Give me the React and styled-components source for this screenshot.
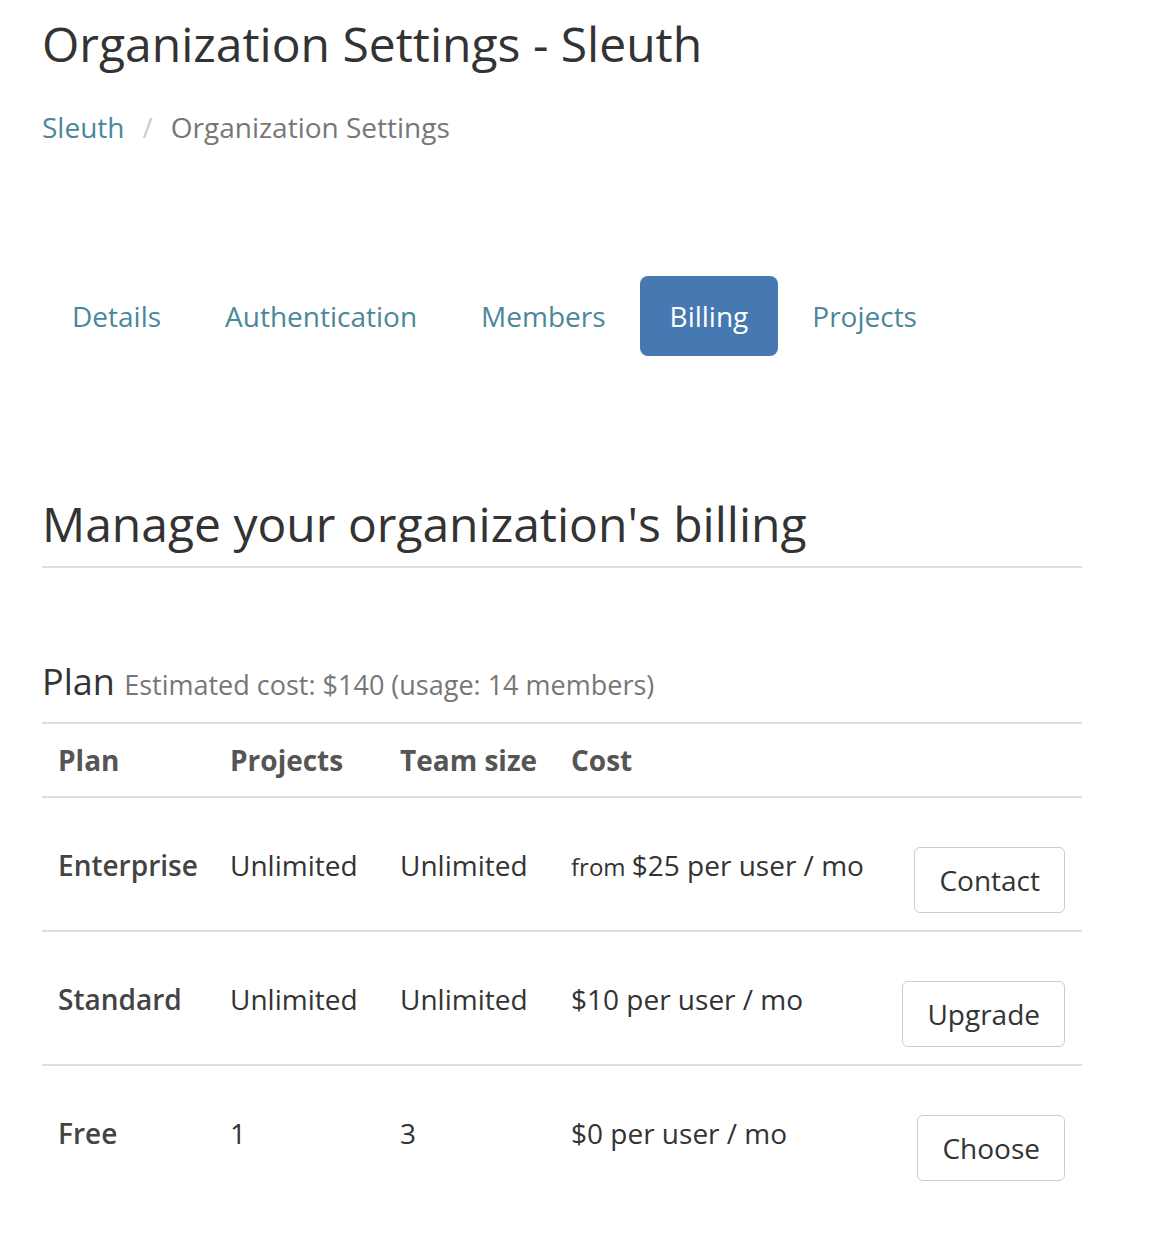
import React from "react";
import styled, { createGlobalStyle } from "styled-components";

const GlobalStyle = createGlobalStyle`
  body {
    margin: 0;
    background: #fff;
    font-family: "Open Sans", "Liberation Sans", sans-serif;
    color: #333;
  }
`;

const tabs = ["Details", "Authentication", "Members", "Billing", "Projects"];

const plans = [
  { name: "Enterprise", projects: "Unlimited", team: "Unlimited", prefix: "from", cost: "$25 per user / mo", action: "Contact" },
  { name: "Standard", projects: "Unlimited", team: "Unlimited", cost: "$10 per user / mo", action: "Upgrade" },
  { name: "Free", projects: "1", team: "3", cost: "$0 per user / mo", action: "Choose" },
];

const App = () => {
  return (
    <Page>
      <GlobalStyle />
      <Title>Organization Settings - Sleuth</Title>
      <Breadcrumb>
        <Crumb href="#">Sleuth</Crumb>
        <Sep>/</Sep>
        <Current>Organization Settings</Current>
      </Breadcrumb>
      <Tabs>
        {tabs.map((t) => (
          <Tab key={t} $active={t === "Billing"}>
            {t}
          </Tab>
        ))}
      </Tabs>
      <PageHeader>Manage your organization's billing</PageHeader>
      <SectionTitle>
        Plan <small>Estimated cost: $140 (usage: 14 members)</small>
      </SectionTitle>
      <Table>
        <HeadCell>Plan</HeadCell>
        <HeadCell>Projects</HeadCell>
        <HeadCell>Team size</HeadCell>
        <HeadCell>Cost</HeadCell>
        <HeadCell />
        {plans.map((p, i) => {
          const last = i === plans.length - 1;
          return (
            <React.Fragment key={p.name}>
              <Cell $bold $last={last}>{p.name}</Cell>
              <Cell $last={last}>{p.projects}</Cell>
              <Cell $last={last}>{p.team}</Cell>
              <Cell $last={last}>
                {p.prefix && <Prefix>{p.prefix} </Prefix>}
                {p.cost}
              </Cell>
              <ActionCell $last={last}>
                <Button>{p.action}</Button>
              </ActionCell>
            </React.Fragment>
          );
        })}
      </Table>
    </Page>
  );
};

export default App;

const Page = styled.div`
  width: 1040px;
  padding: 0 42px 40px;
`;

const Title = styled.h1`
  margin: 15px 0 0;
  font-size: 48px;
  font-weight: 400;
  line-height: 1.2;
  color: #333;
`;

const Breadcrumb = styled.div`
  display: flex;
  align-items: center;
  margin-top: 34px;
  font-size: 28px;
  line-height: 40px;
`;

const Crumb = styled.a`
  color: #4b879b;
  text-decoration: none;
`;

const Sep = styled.span`
  color: #ccc;
  padding: 0 18px;
`;

const Current = styled.span`
  color: #777;
`;

const Tabs = styled.div`
  display: flex;
  gap: 4px;
  margin-top: 129px;
`;

const Tab = styled.a`
  padding: 20px 30px;
  font-size: 28px;
  line-height: 40px;
  border-radius: 8px;
  color: ${(p) => (p.$active ? "#fff" : "#4b879b")};
  background: ${(p) => (p.$active ? "#4679b2" : "transparent")};
`;

const PageHeader = styled.h2`
  margin: 139px 0 0;
  padding-bottom: 14px;
  border-bottom: 2px solid #ddd;
  font-size: 48px;
  font-weight: 400;
  line-height: 1.2;
  color: #333;
`;

const SectionTitle = styled.h3`
  margin: 94px 0 0;
  padding-bottom: 20px;
  border-bottom: 2px solid #ddd;
  font-size: 36px;
  font-weight: 400;
  line-height: 1.1;
  color: #333;

  small {
    font-size: 27px;
    color: #777;
  }
`;

const Table = styled.div`
  display: grid;
  grid-template-columns: 172px 170px 171px 1fr auto;
`;

const HeadCell = styled.div`
  padding: 16px 16px 16px;
  font-size: 28px;
  line-height: 40px;
  font-weight: 700;
  color: #555;
  border-bottom: 2px solid #ddd;
`;

const Cell = styled.div`
  padding: 47px 16px 0;
  font-size: 28px;
  line-height: 40px;
  font-weight: ${(p) => (p.$bold ? 600 : 400)};
  color: ${(p) => (p.$bold ? "#444" : "#333")};
  border-bottom: ${(p) => (p.$last ? "none" : "2px solid #ddd")};
  white-space: nowrap;
`;

const Prefix = styled.span`
  font-size: 24px;
`;

const ActionCell = styled.div`
  display: flex;
  justify-content: flex-end;
  align-items: flex-start;
  padding: 49px 17px 17px 16px;
  border-bottom: ${(p) => (p.$last ? "none" : "2px solid #ddd")};
`;

const Button = styled.button`
  padding: 12px 24px;
  font-family: inherit;
  font-size: 28px;
  line-height: 40px;
  color: #333;
  background: #fff;
  border: 1px solid #ccc;
  border-radius: 6px;
`;
